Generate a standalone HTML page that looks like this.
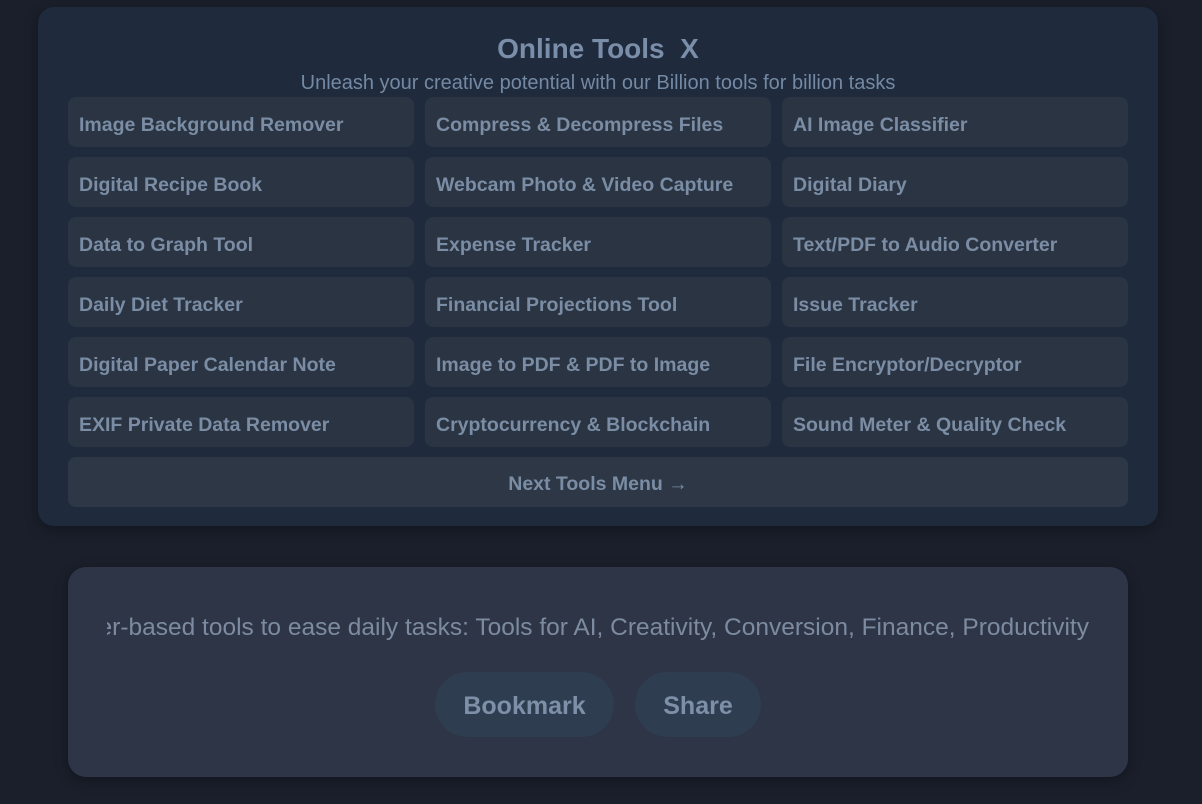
<!DOCTYPE html>
<html><head><meta charset="utf-8"><style>
*{box-sizing:border-box;margin:0;padding:0}
body{width:1202px;height:804px;background:#1a1f2b;font-family:"Liberation Sans",sans-serif;position:relative;overflow:hidden}
.top{position:absolute;left:38px;top:7px;width:1120px;height:519px;background:#1f2a3c;border-radius:16px;box-shadow:0 4px 14px rgba(0,0,0,.3)}
h1{position:absolute;top:26px;left:0;right:0;text-align:center;font-size:28px;font-weight:bold;color:#7a8ea9}
.sub{position:absolute;top:65px;left:0;right:0;text-align:center;font-size:20px;color:#7489a3}
.grid{position:absolute;left:30px;top:90px;display:grid;grid-template-columns:346px 346px 346px;column-gap:11px;row-gap:10px}
.b{height:50px;background:#2b3442;border-radius:8px;color:#7a8da5;font-weight:bold;font-size:19.5px;line-height:56px;padding-left:11px;white-space:nowrap}
.next{position:absolute;left:30px;top:450px;width:1060px;height:50px;background:#2e3746;border-radius:8px;color:#7a8da5;font-weight:bold;font-size:19.5px;line-height:54px;text-align:center}
.bot{position:absolute;left:68px;top:567px;width:1060px;height:210px;background:#2d3547;border-radius:18px;box-shadow:0 4px 14px rgba(0,0,0,.3)}
.mq{position:absolute;left:39px;top:43px;width:982px;height:36px;overflow:hidden;display:flex;justify-content:flex-end}
.mq span{white-space:nowrap;font-size:24.5px;color:#7d8ba0;line-height:36px;flex-shrink:0}
.btn{position:absolute;top:105px;height:65px;border-radius:33px;background:#2f3d50;color:#7e90a8;font-weight:bold;font-size:25px;line-height:69px;text-align:center}
</style></head><body>
<div class="top">
<h1>Online Tools&nbsp; X</h1>
<div class="sub">Unleash your creative potential with our Billion tools for billion tasks</div>
<div class="grid">
<div class="b">Image Background Remover</div><div class="b">Compress &amp; Decompress Files</div><div class="b">AI Image Classifier</div>
<div class="b">Digital Recipe Book</div><div class="b">Webcam Photo &amp; Video Capture</div><div class="b">Digital Diary</div>
<div class="b">Data to Graph Tool</div><div class="b">Expense Tracker</div><div class="b">Text/PDF to Audio Converter</div>
<div class="b">Daily Diet Tracker</div><div class="b">Financial Projections Tool</div><div class="b">Issue Tracker</div>
<div class="b">Digital Paper Calendar Note</div><div class="b">Image to PDF &amp; PDF to Image</div><div class="b">File Encryptor/Decryptor</div>
<div class="b">EXIF Private Data Remover</div><div class="b">Cryptocurrency &amp; Blockchain</div><div class="b">Sound Meter &amp; Quality Check</div>
</div>
<div class="next">Next Tools Menu →</div>
</div>
<div class="bot">
<div class="mq"><span>Browser-based tools to ease daily tasks: Tools for AI, Creativity, Conversion, Finance, Productivity</span></div>
<div class="btn" style="left:367px;width:179px">Bookmark</div>
<div class="btn" style="left:567px;width:126px">Share</div>
</div>
</body></html>
